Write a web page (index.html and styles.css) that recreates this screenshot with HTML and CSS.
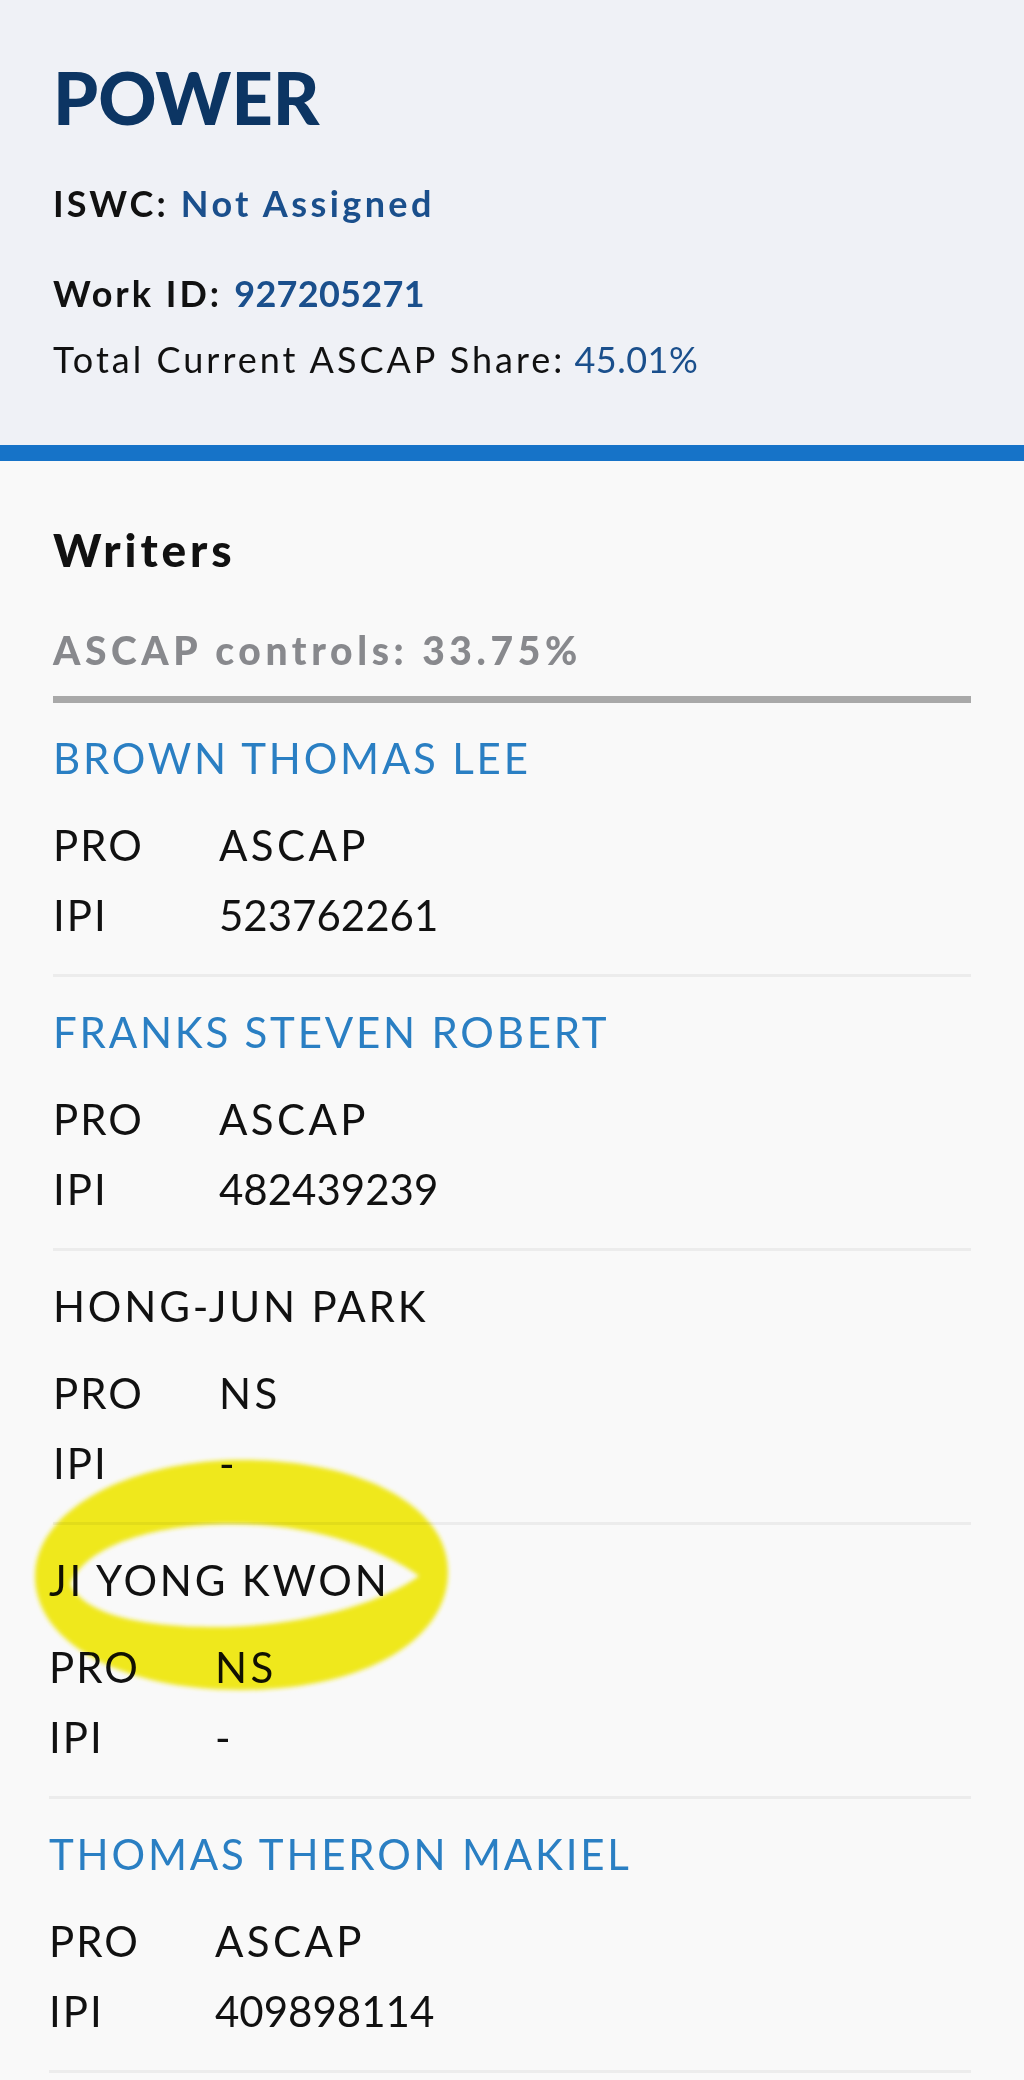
FILE: index.html
```html
<!DOCTYPE html>
<html lang="en">
<head>
<meta charset="utf-8">
<title>POWER - Work Details</title>
<link rel="stylesheet" href="styles.css">
</head>
<body>
<header class="work-header">
  <h1 class="work-title">POWER</h1>
  <p class="meta meta-iswc"><span class="meta-label">ISWC:</span> <span class="meta-value">Not Assigned</span></p>
  <p class="meta meta-id"><span class="meta-label">Work ID:</span> <span class="meta-value num">927205271</span></p>
  <p class="meta-share"><span class="share-label">Total Current ASCAP Share:</span> <span class="share-value num">45.01%</span></p>
</header>

<main class="writers">
  <h2 class="section-title">Writers</h2>
  <div class="controls">ASCAP controls: 33.75%</div>

  <section class="writer">
    <div class="writer-name link">BROWN THOMAS LEE</div>
    <div class="row"><span class="row-label">PRO</span><span class="row-value">ASCAP</span></div>
    <div class="row"><span class="row-label">IPI</span><span class="row-value num">523762261</span></div>
  </section>

  <section class="writer">
    <div class="writer-name link">FRANKS STEVEN ROBERT</div>
    <div class="row"><span class="row-label">PRO</span><span class="row-value">ASCAP</span></div>
    <div class="row"><span class="row-label">IPI</span><span class="row-value num">482439239</span></div>
  </section>

  <section class="writer">
    <div class="writer-name">HONG-JUN PARK</div>
    <div class="row"><span class="row-label">PRO</span><span class="row-value">NS</span></div>
    <div class="row"><span class="row-label">IPI</span><span class="row-value num">-</span></div>
  </section>

  <section class="writer shifted">
    <div class="writer-name">JI YONG KWON</div>
    <div class="row"><span class="row-label">PRO</span><span class="row-value">NS</span></div>
    <div class="row"><span class="row-label">IPI</span><span class="row-value num">-</span></div>
  </section>

  <section class="writer shifted">
    <div class="writer-name link">THOMAS THERON MAKIEL</div>
    <div class="row"><span class="row-label">PRO</span><span class="row-value">ASCAP</span></div>
    <div class="row"><span class="row-label">IPI</span><span class="row-value num">409898114</span></div>
  </section>
</main>

<svg class="marker" width="1024" height="300" viewBox="0 1420 1024 300" aria-hidden="true">
  <defs>
    <filter id="soft" x="-10%" y="-10%" width="120%" height="120%">
      <feGaussianBlur stdDeviation="2"/>
    </filter>
  </defs>
  <path filter="url(#soft)" fill="#f5ee1e" fill-rule="evenodd"
        d="M 35 1576 C 35 1510, 130 1460, 242 1460 C 360 1460, 448 1505, 448 1572 C 448 1642, 360 1690, 242 1690 C 120 1690, 35 1642, 35 1576 Z
           M 70 1584 C 88 1543, 160 1524, 232 1524 C 312 1524, 380 1548, 419 1576 C 380 1604, 300 1627, 215 1627 C 140 1627, 84 1614, 70 1584 Z"/>
</svg>
</body>
</html>
```

FILE: styles.css
```css
* {
  box-sizing: border-box;
}

body {
  margin: 0;
  position: relative;
  background: #f9f9f9;
  font-family: Lato, "Liberation Sans", sans-serif;
  color: #111111;
}

.work-header {
  background: #eff1f6;
  padding: 57px 53px 62px;
  border-bottom: 16px solid #1673c8;
}

.work-title {
  margin: 0;
  font-size: 72px;
  line-height: 80px;
  font-weight: 900;
  color: #0c3563;
}

.meta {
  margin: 42px 0 0;
  font-size: 36px;
  line-height: 48px;
  font-weight: 700;
  letter-spacing: 3.4px;
}

.meta-label {
  color: #111111;
  letter-spacing: 3px;
}

.meta-value {
  color: #1a4f8c;
}

.meta-share {
  margin: 18px 0 0;
  font-size: 36px;
  line-height: 48px;
  font-weight: 400;
}

.share-label {
  letter-spacing: 3px;
}

.share-value {
  color: #1a4f8c;
}

.num {
  letter-spacing: 0.5px;
}

.meta .num {
  letter-spacing: 0.3px;
}

.writers {
  padding: 61px 53px 0;
}

.section-title {
  margin: 0;
  font-size: 46px;
  line-height: 56px;
  font-weight: 900;
  letter-spacing: 3.9px;
  color: #111111;
}

.controls {
  margin-top: 48px;
  padding-bottom: 22px;
  border-bottom: 7px solid #a9a9a9;
  font-size: 39px;
  line-height: 48px;
  font-weight: 900;
  letter-spacing: 4.6px;
  color: #88898d;
}

.writer {
  padding: 20px 0 24px;
  border-bottom: 3px solid #ececec;
}

.writer.shifted {
  margin-left: -4px;
}

.writer-name {
  font-size: 42px;
  line-height: 70px;
  margin-bottom: 17px;
  letter-spacing: 2.8px;
  color: #111111;
}

.writer-name.link {
  color: #2a7fc3;
}

.row {
  display: flex;
  font-size: 42px;
  line-height: 70px;
  color: #111111;
}

.row-label {
  width: 166px;
  flex: none;
  letter-spacing: 2px;
}

.row-value {
  letter-spacing: 3.4px;
}

.row-value.num {
  letter-spacing: 0;
}

.marker {
  position: absolute;
  left: 0;
  top: 1420px;
  mix-blend-mode: multiply;
  pointer-events: none;
}
```
